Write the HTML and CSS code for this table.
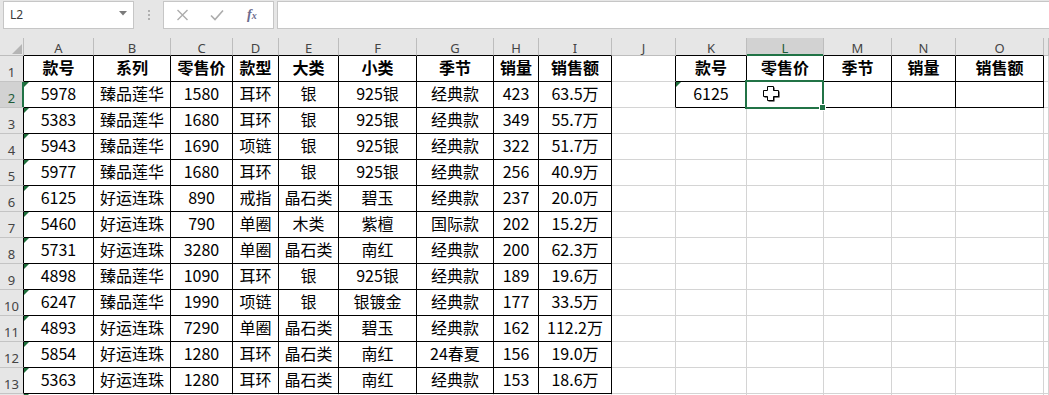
FILE: index.html
```html
<!DOCTYPE html>
<html lang="zh-CN">
<head>
<meta charset="utf-8">
<title>Sheet</title>
<link rel="stylesheet" href="styles.css">
</head>
<body>
<div class="bar">
  <div class="namebox"><span>L2</span><svg class="arrow" width="8" height="5" viewBox="0 0 8 5"><path d="M0 0H8L4 4.5Z" fill="#7a7a7a"/></svg></div>
  <div class="grip"><i></i><i></i><i></i></div>
  <div class="fbtns">
    <svg class="ico" width="13" height="12" viewBox="0 0 13 12"><path d="M1.5 1L11.5 11M11.5 1L1.5 11" stroke="#acacac" stroke-width="1.4" fill="none"/></svg>
    <svg class="ico" width="14" height="12" viewBox="0 0 14 12"><path d="M1 6.5L5 10.5L13 1.5" stroke="#acacac" stroke-width="1.6" fill="none"/></svg>
    <span class="fx"><i>f</i><em>x</em></span>
  </div>
  <div class="finput"></div>
</div>

<div class="sheet">
  <div class="row head">
    <div class="corner"><span class="tri-corner"></span></div>
    <div class="ch tb">A</div><div class="ch tb">B</div><div class="ch tb">C</div><div class="ch tb">D</div><div class="ch tb">E</div><div class="ch tb">F</div><div class="ch tb">G</div><div class="ch tb">H</div><div class="ch tb">I</div>
    <div class="ch">J</div>
    <div class="ch tb">K</div><div class="ch tb sel">L</div><div class="ch tb">M</div><div class="ch tb">N</div><div class="ch tb">O</div>
    <div class="ch"></div>
  </div>

  <div class="row">
    <div class="rh">1</div>
    <div class="c b h">款号</div><div class="c b h">系列</div><div class="c b h">零售价</div><div class="c b h">款型</div><div class="c b h">大类</div><div class="c b h">小类</div><div class="c b h">季节</div><div class="c b h">销量</div><div class="c b h">销售额</div>
    <div class="c jr"></div>
    <div class="c b h">款号</div><div class="c b h">零售价</div><div class="c b h">季节</div><div class="c b h">销量</div><div class="c b h">销售额</div>
    <div class="c"></div>
  </div>

  <div class="row">
    <div class="rh sel">2</div>
    <div class="c b tri">5978</div><div class="c b">臻品莲华</div><div class="c b">1580</div><div class="c b">耳环</div><div class="c b">银</div><div class="c b">925银</div><div class="c b">经典款</div><div class="c b">423</div><div class="c b">63.5万</div>
    <div class="c jr"></div>
    <div class="c b tri">6125</div><div class="c b"></div><div class="c b"></div><div class="c b"></div><div class="c b"></div>
    <div class="c"></div>
  </div>

  <div class="row">
    <div class="rh">3</div>
    <div class="c b tri">5383</div><div class="c b">臻品莲华</div><div class="c b">1680</div><div class="c b">耳环</div><div class="c b">银</div><div class="c b">925银</div><div class="c b">经典款</div><div class="c b">349</div><div class="c b">55.7万</div>
    <div class="c"></div><div class="c"></div><div class="c"></div><div class="c"></div><div class="c"></div><div class="c"></div><div class="c"></div>
  </div>

  <div class="row">
    <div class="rh">4</div>
    <div class="c b tri">5943</div><div class="c b">臻品莲华</div><div class="c b">1690</div><div class="c b">项链</div><div class="c b">银</div><div class="c b">925银</div><div class="c b">经典款</div><div class="c b">322</div><div class="c b">51.7万</div>
    <div class="c"></div><div class="c"></div><div class="c"></div><div class="c"></div><div class="c"></div><div class="c"></div><div class="c"></div>
  </div>

  <div class="row">
    <div class="rh">5</div>
    <div class="c b tri">5977</div><div class="c b">臻品莲华</div><div class="c b">1680</div><div class="c b">耳环</div><div class="c b">银</div><div class="c b">925银</div><div class="c b">经典款</div><div class="c b">256</div><div class="c b">40.9万</div>
    <div class="c"></div><div class="c"></div><div class="c"></div><div class="c"></div><div class="c"></div><div class="c"></div><div class="c"></div>
  </div>

  <div class="row">
    <div class="rh">6</div>
    <div class="c b tri">6125</div><div class="c b">好运连珠</div><div class="c b">890</div><div class="c b">戒指</div><div class="c b">晶石类</div><div class="c b">碧玉</div><div class="c b">经典款</div><div class="c b">237</div><div class="c b">20.0万</div>
    <div class="c"></div><div class="c"></div><div class="c"></div><div class="c"></div><div class="c"></div><div class="c"></div><div class="c"></div>
  </div>

  <div class="row">
    <div class="rh">7</div>
    <div class="c b tri">5460</div><div class="c b">好运连珠</div><div class="c b">790</div><div class="c b">单圈</div><div class="c b">木类</div><div class="c b">紫檀</div><div class="c b">国际款</div><div class="c b">202</div><div class="c b">15.2万</div>
    <div class="c"></div><div class="c"></div><div class="c"></div><div class="c"></div><div class="c"></div><div class="c"></div><div class="c"></div>
  </div>

  <div class="row">
    <div class="rh">8</div>
    <div class="c b tri">5731</div><div class="c b">好运连珠</div><div class="c b">3280</div><div class="c b">单圈</div><div class="c b">晶石类</div><div class="c b">南红</div><div class="c b">经典款</div><div class="c b">200</div><div class="c b">62.3万</div>
    <div class="c"></div><div class="c"></div><div class="c"></div><div class="c"></div><div class="c"></div><div class="c"></div><div class="c"></div>
  </div>

  <div class="row">
    <div class="rh">9</div>
    <div class="c b tri">4898</div><div class="c b">臻品莲华</div><div class="c b">1090</div><div class="c b">耳环</div><div class="c b">银</div><div class="c b">925银</div><div class="c b">经典款</div><div class="c b">189</div><div class="c b">19.6万</div>
    <div class="c"></div><div class="c"></div><div class="c"></div><div class="c"></div><div class="c"></div><div class="c"></div><div class="c"></div>
  </div>

  <div class="row">
    <div class="rh">10</div>
    <div class="c b tri">6247</div><div class="c b">臻品莲华</div><div class="c b">1990</div><div class="c b">项链</div><div class="c b">银</div><div class="c b">银镀金</div><div class="c b">经典款</div><div class="c b">177</div><div class="c b">33.5万</div>
    <div class="c"></div><div class="c"></div><div class="c"></div><div class="c"></div><div class="c"></div><div class="c"></div><div class="c"></div>
  </div>

  <div class="row">
    <div class="rh">11</div>
    <div class="c b tri">4893</div><div class="c b">好运连珠</div><div class="c b">7290</div><div class="c b">单圈</div><div class="c b">晶石类</div><div class="c b">碧玉</div><div class="c b">经典款</div><div class="c b">162</div><div class="c b">112.2万</div>
    <div class="c"></div><div class="c"></div><div class="c"></div><div class="c"></div><div class="c"></div><div class="c"></div><div class="c"></div>
  </div>

  <div class="row">
    <div class="rh">12</div>
    <div class="c b tri">5854</div><div class="c b">好运连珠</div><div class="c b">1280</div><div class="c b">耳环</div><div class="c b">晶石类</div><div class="c b">南红</div><div class="c b">24春夏</div><div class="c b">156</div><div class="c b">19.0万</div>
    <div class="c"></div><div class="c"></div><div class="c"></div><div class="c"></div><div class="c"></div><div class="c"></div><div class="c"></div>
  </div>

  <div class="row">
    <div class="rh">13</div>
    <div class="c b tri">5363</div><div class="c b">好运连珠</div><div class="c b">1280</div><div class="c b">耳环</div><div class="c b">晶石类</div><div class="c b">南红</div><div class="c b">经典款</div><div class="c b">153</div><div class="c b">18.6万</div>
    <div class="c"></div><div class="c"></div><div class="c"></div><div class="c"></div><div class="c"></div><div class="c"></div><div class="c"></div>
  </div>

  <div class="row">
    <div class="rh plain"></div>
    <div class="c tri"></div><div class="c"></div><div class="c"></div><div class="c"></div><div class="c"></div><div class="c"></div><div class="c"></div><div class="c"></div><div class="c"></div>
    <div class="c"></div><div class="c"></div><div class="c"></div><div class="c"></div><div class="c"></div><div class="c"></div><div class="c"></div>
  </div>
</div>

<div class="selbox"></div>
<div class="handle"></div>
<svg class="cursor" width="18" height="17" viewBox="0 0 18 17">
  <path d="M5.5 1.5H11.5V5.5H16.5V11.5H11.5V15.5H5.5V11.5H1.5V5.5H5.5Z" fill="#000"/>
  <path d="M4.5 0.5H10.5V4.5H15.5V10.5H10.5V14.5H4.5V10.5H0.5V4.5H4.5Z" fill="#fff" stroke="#000" stroke-width="1"/>
</svg>
</body>
</html>
```

FILE: styles.css
```css
:root {
  --cols: 24px 70px 77px 62px 46px 60px 78px 77px 45px 73px 64px 71px 77px 68px 64px 88px minmax(0, 1fr);
  --green: #217346;
  --grid: #d4d4d4;
  --hdr: #e6e6e6;
}

* { box-sizing: border-box; }

html, body { margin: 0; padding: 0; }

body {
  width: 1049px;
  height: 395px;
  overflow: hidden;
  position: relative;
  background: #fff;
  font-family: "Noto Sans CJK SC", "Noto Sans", sans-serif;
}

/* ---------- formula bar ---------- */
.bar {
  height: 38px;
  background: var(--hdr);
  display: flex;
  align-items: flex-start;
  padding: 1px 0 0 3px;
}

.namebox {
  width: 131px;
  height: 28px;
  background: #fff;
  border: 1px solid #c6c6c6;
  display: flex;
  align-items: center;
  justify-content: space-between;
  padding: 0 6px 1px 6px;
  font: 12px "Noto Sans", sans-serif;
  color: #3a3a3a;
}

.namebox .arrow { margin-bottom: 2px; }

.grip {
  width: 29px;
  height: 27px;
  display: flex;
  flex-direction: column;
  align-items: center;
  justify-content: center;
  gap: 2px;
}

.grip i {
  display: block;
  width: 2px;
  height: 2px;
  background: #b0b0b0;
}

.fbtns {
  width: 111px;
  height: 28px;
  background: #fff;
  border: 1px solid #c6c6c6;
  display: flex;
  align-items: center;
  padding-left: 12px;
  gap: 21px;
}

.fx {
  font-family: "Liberation Serif", serif;
  color: #6b6b8e;
  font-size: 14px;
  line-height: 1;
  margin-left: 2px;
}

.fx i { font-style: italic; font-weight: bold; }
.fx em { font-style: italic; font-weight: bold; font-size: 10px; }

.finput {
  flex: 1;
  margin-left: 3px;
  height: 28px;
  background: #fff;
  border: 1px solid #c6c6c6;
  border-right: none;
}

/* ---------- sheet grid ---------- */
.sheet {
  width: 1049px;
  height: 357px;
  overflow: hidden;
}

.row {
  display: grid;
  grid-template-columns: var(--cols);
  height: 26px;
}

.row.head { height: 18px; }

.corner {
  background: var(--hdr);
  border-right: 1px solid #bdbdbd;
  border-bottom: 1px solid #bdbdbd;
  display: flex;
  justify-content: flex-end;
  align-items: flex-end;
  padding: 0 1px 1px 0;
}

.tri-corner {
  width: 0;
  height: 0;
  border-bottom: 10px solid #b5b5b5;
  border-left: 10px solid transparent;
}

.ch {
  background: var(--hdr);
  border-right: 1px solid #bdbdbd;
  border-bottom: 1px solid #bdbdbd;
  display: flex;
  justify-content: center;
  align-items: flex-end;
  font: 13px/13px "Noto Sans", sans-serif;
  color: #444;
  padding-bottom: 0;
}

.ch.tb { border-bottom-color: #000; }

.ch.sel {
  background: #d2d2d2;
  color: #1e5c39;
  border-bottom-color: var(--green);
  box-shadow: inset 0 -1px 0 var(--green);
}

.rh {
  background: var(--hdr);
  border-right: 1px solid #000;
  border-bottom: 1px solid #c4c4c4;
  display: flex;
  justify-content: center;
  align-items: flex-end;
  font: 13px/13px "Noto Sans", sans-serif;
  color: #444;
  padding-bottom: 2px;
}

.rh.plain { border-right-color: #bdbdbd; }

.rh.sel {
  background: #d2d2d2;
  color: #1e5c39;
  border-right-color: var(--green);
  box-shadow: inset -1px 0 0 var(--green);
}

.c {
  position: relative;
  border-right: 1px solid var(--grid);
  border-bottom: 1px solid var(--grid);
  display: flex;
  justify-content: center;
  align-items: center;
  padding-bottom: 3px;
  font-size: 16px;
  line-height: 16px;
  color: #000;
  white-space: nowrap;
}

.c.b {
  border-right-color: #000;
  border-bottom-color: #000;
}

.c.jr { border-right-color: #000; }

.c.h { font-weight: 700; }

.c.tri::before {
  content: "";
  position: absolute;
  top: 0;
  left: 0;
  width: 0;
  height: 0;
  border-top: 5px solid #1f6f3c;
  border-right: 5px solid transparent;
}

/* ---------- overlays ---------- */
.selbox {
  position: absolute;
  left: 745px;
  top: 80px;
  width: 79px;
  height: 29px;
  border: 2px solid var(--green);
}

.handle {
  position: absolute;
  left: 819px;
  top: 104px;
  width: 7px;
  height: 7px;
  background: var(--green);
  border: 1px solid #fff;
}

.cursor {
  position: absolute;
  left: 763px;
  top: 86px;
}
```
